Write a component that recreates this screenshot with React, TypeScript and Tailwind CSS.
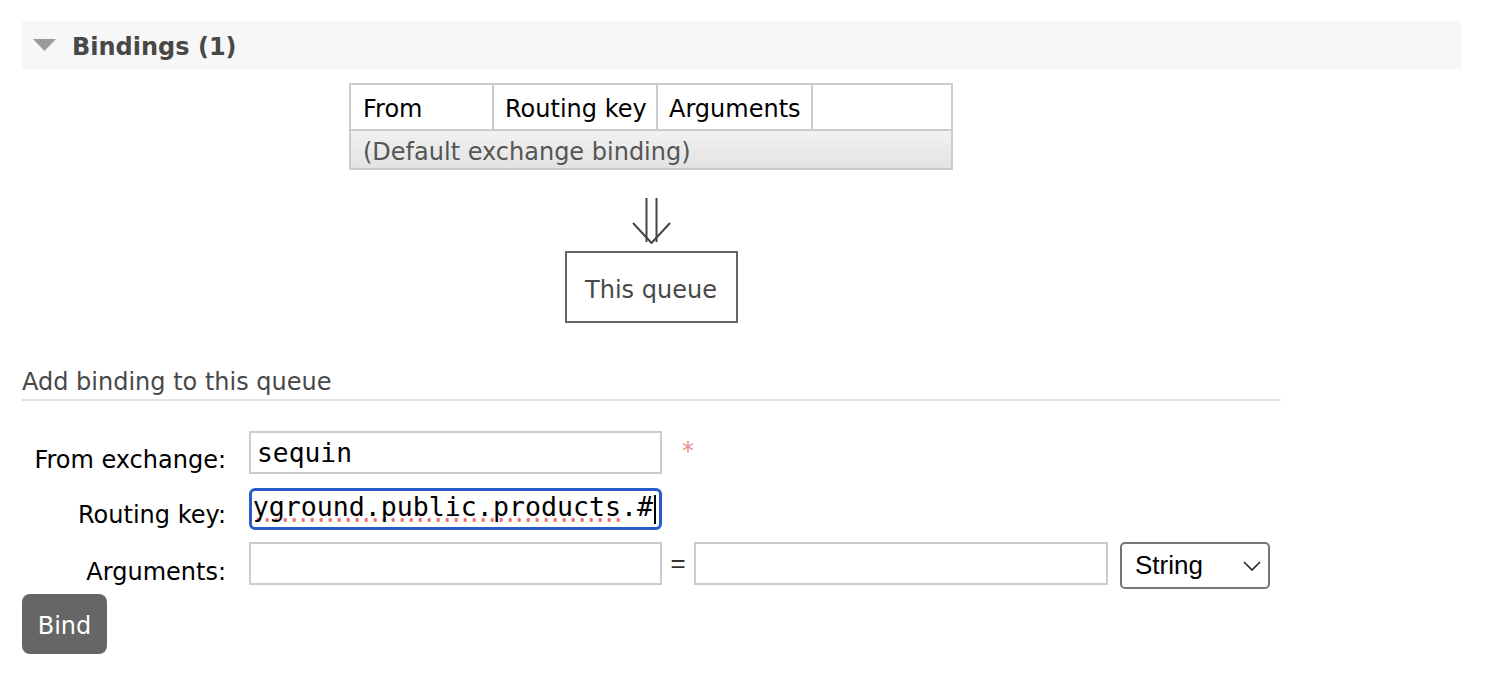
import React from 'react';

const sans = 'font-["DejaVu_Sans",Verdana,sans-serif]';
const mono = 'font-["DejaVu_Sans_Mono",Menlo,monospace]';

const DoubleArrow: React.FC = () => (
  <svg width="40" height="46" viewBox="0 0 40 46" fill="none" stroke="#444" strokeWidth="2">
    <line x1="14.5" y1="0" x2="14.5" y2="44" />
    <line x1="24.5" y1="0" x2="24.5" y2="44" />
    <polyline points="1,25 19.5,45 38,25" />
  </svg>
);

const BindingsTable: React.FC = () => (
  <table className="w-[604px] border-collapse border-2 border-[#ccc] text-[24px] leading-[30px]">
    <thead>
      <tr className="h-[46px] bg-white">
        <th className="w-[143px] border-2 border-[#ccc] pl-[12px] pt-[4px] text-left font-normal text-black">From</th>
        <th className="w-[164px] border-2 border-[#ccc] pl-[11px] pt-[4px] text-left font-normal text-black">Routing key</th>
        <th className="w-[155px] border-2 border-[#ccc] pl-[11px] pt-[4px] text-left font-normal text-black">Arguments</th>
        <th className="border-2 border-[#ccc]"></th>
      </tr>
    </thead>
    <tbody>
      <tr className="h-[39px] bg-gradient-to-b from-[#f2f2f2] to-[#e2e2e2]">
        <td colSpan={4} className="pl-[12px] pt-[4px] text-[#555]">
          (Default exchange binding)
        </td>
      </tr>
    </tbody>
  </table>
);

const FormLabel: React.FC<{ text: string; pt: string }> = ({ text, pt }) => (
  <label className={`w-[204px] shrink-0 text-right text-[24px] leading-[30px] text-black ${pt}`}>{text}</label>
);

export default function App() {
  return (
    <div className={`min-h-screen bg-white pl-[22px] pt-[21px] ${sans}`}>
      <div className="flex h-[48px] w-[1440px] items-center bg-[#f7f7f7]">
        <svg width="23" height="12" viewBox="0 0 23 12" className="ml-[11px]">
          <polygon points="0,0 23,0 11.5,12" fill="#9a9a9a" />
        </svg>
        <h2 className="ml-[16px] pt-[4px] text-[24px] font-bold leading-[30px] text-[#484848]">Bindings (1)</h2>
      </div>

      <div className="ml-[327px] mt-[14px] flex w-[604px] flex-col items-center">
        <BindingsTable />
        <div className="mt-[28px] flex justify-center pl-[1px]">
          <DoubleArrow />
        </div>
        <div className="mt-[7px] flex h-[72px] w-[173px] items-center justify-center border-2 border-[#666] pt-[5px] text-[24px] leading-[30px] text-[#484848]">
          This queue
        </div>
      </div>

      <h3 className="mt-[44px] w-[1259px] border-b-2 border-[#e2e2e2] pb-[2px] text-[24px] font-normal leading-[30px] text-[#484848]">
        Add binding to this queue
      </h3>

      <form className="mt-[30px] flex flex-col" onSubmit={(e) => e.preventDefault()}>
        <div className="flex h-[43px] items-start">
          <FormLabel text="From exchange:" pt="pt-[14px]" />
          <input
            readOnly
            value="sequin"
            className={`ml-[23px] h-[43px] w-[413px] border-2 border-[#ccc] bg-white px-[6px] text-[26.3px] text-black outline-none ${mono}`}
          />
          <span className="ml-[20px] mt-[5px] text-[24px] leading-[30px] text-[#f08a8a]">*</span>
        </div>

        <div className="mt-[14px] flex h-[42px] items-start">
          <FormLabel text="Routing key:" pt="pt-[12px]" />
          <div className="ml-[23px] flex h-[42px] w-[413px] items-start justify-end overflow-hidden rounded-[6px] border-[3px] border-[#2a5cc9] bg-white pr-[3px] pt-[1px]">
            <span className={`whitespace-nowrap text-[26.6px] leading-[30px] text-black ${mono}`}>
              <span className="bg-[radial-gradient(circle,#ef7070_1.7px,transparent_2.1px)] bg-[length:9px_6px] bg-bottom bg-repeat-x pb-[1px]">
                sequin.playground.public.products
              </span>
              .#
            </span>
            <span className="ml-[1px] mt-[3px] h-[29px] w-[2px] shrink-0 bg-black"></span>
          </div>
        </div>

        <div className="mt-[12px] flex h-[47px] items-start">
          <FormLabel text="Arguments:" pt="pt-[15px]" />
          <input
            readOnly
            value=""
            className={`ml-[23px] h-[43px] w-[413px] border-2 border-[#ccc] bg-white px-[6px] text-[26px] outline-none ${mono}`}
          />
          <span className="flex h-[43px] w-[32px] items-center justify-center font-['Liberation_Sans',Arial,sans-serif] text-[26px] text-[#333]">
            =
          </span>
          <input
            readOnly
            value=""
            className={`h-[43px] w-[414px] border-2 border-[#ccc] bg-white px-[6px] text-[26px] outline-none ${mono}`}
          />
          <div className="relative ml-[12px] h-[47px] w-[150px]">
            <select
              defaultValue="string"
              className="h-[47px] w-[150px] appearance-none rounded-[5px] border-2 border-[#767676] bg-white pl-[13px] font-['Liberation_Sans',Arial,sans-serif] text-[26px] text-black outline-none"
            >
              <option value="string">String</option>
              <option value="number">Number</option>
              <option value="boolean">Boolean</option>
              <option value="list">List</option>
            </select>
            <svg
              width="18"
              height="10"
              viewBox="0 0 18 10"
              className="pointer-events-none absolute left-[123px] top-[19px]"
              fill="none"
              stroke="#222"
              strokeWidth="1.6"
            >
              <polyline points="1,1 9,9 17,1" />
            </svg>
          </div>
        </div>

        <div className="mt-[5px]">
          <button
            type="submit"
            className="h-[60px] w-[85px] rounded-[8px] bg-[#666] pt-[3px] text-[24px] leading-[30px] text-white"
          >
            Bind
          </button>
        </div>
      </form>
    </div>
  );
}
